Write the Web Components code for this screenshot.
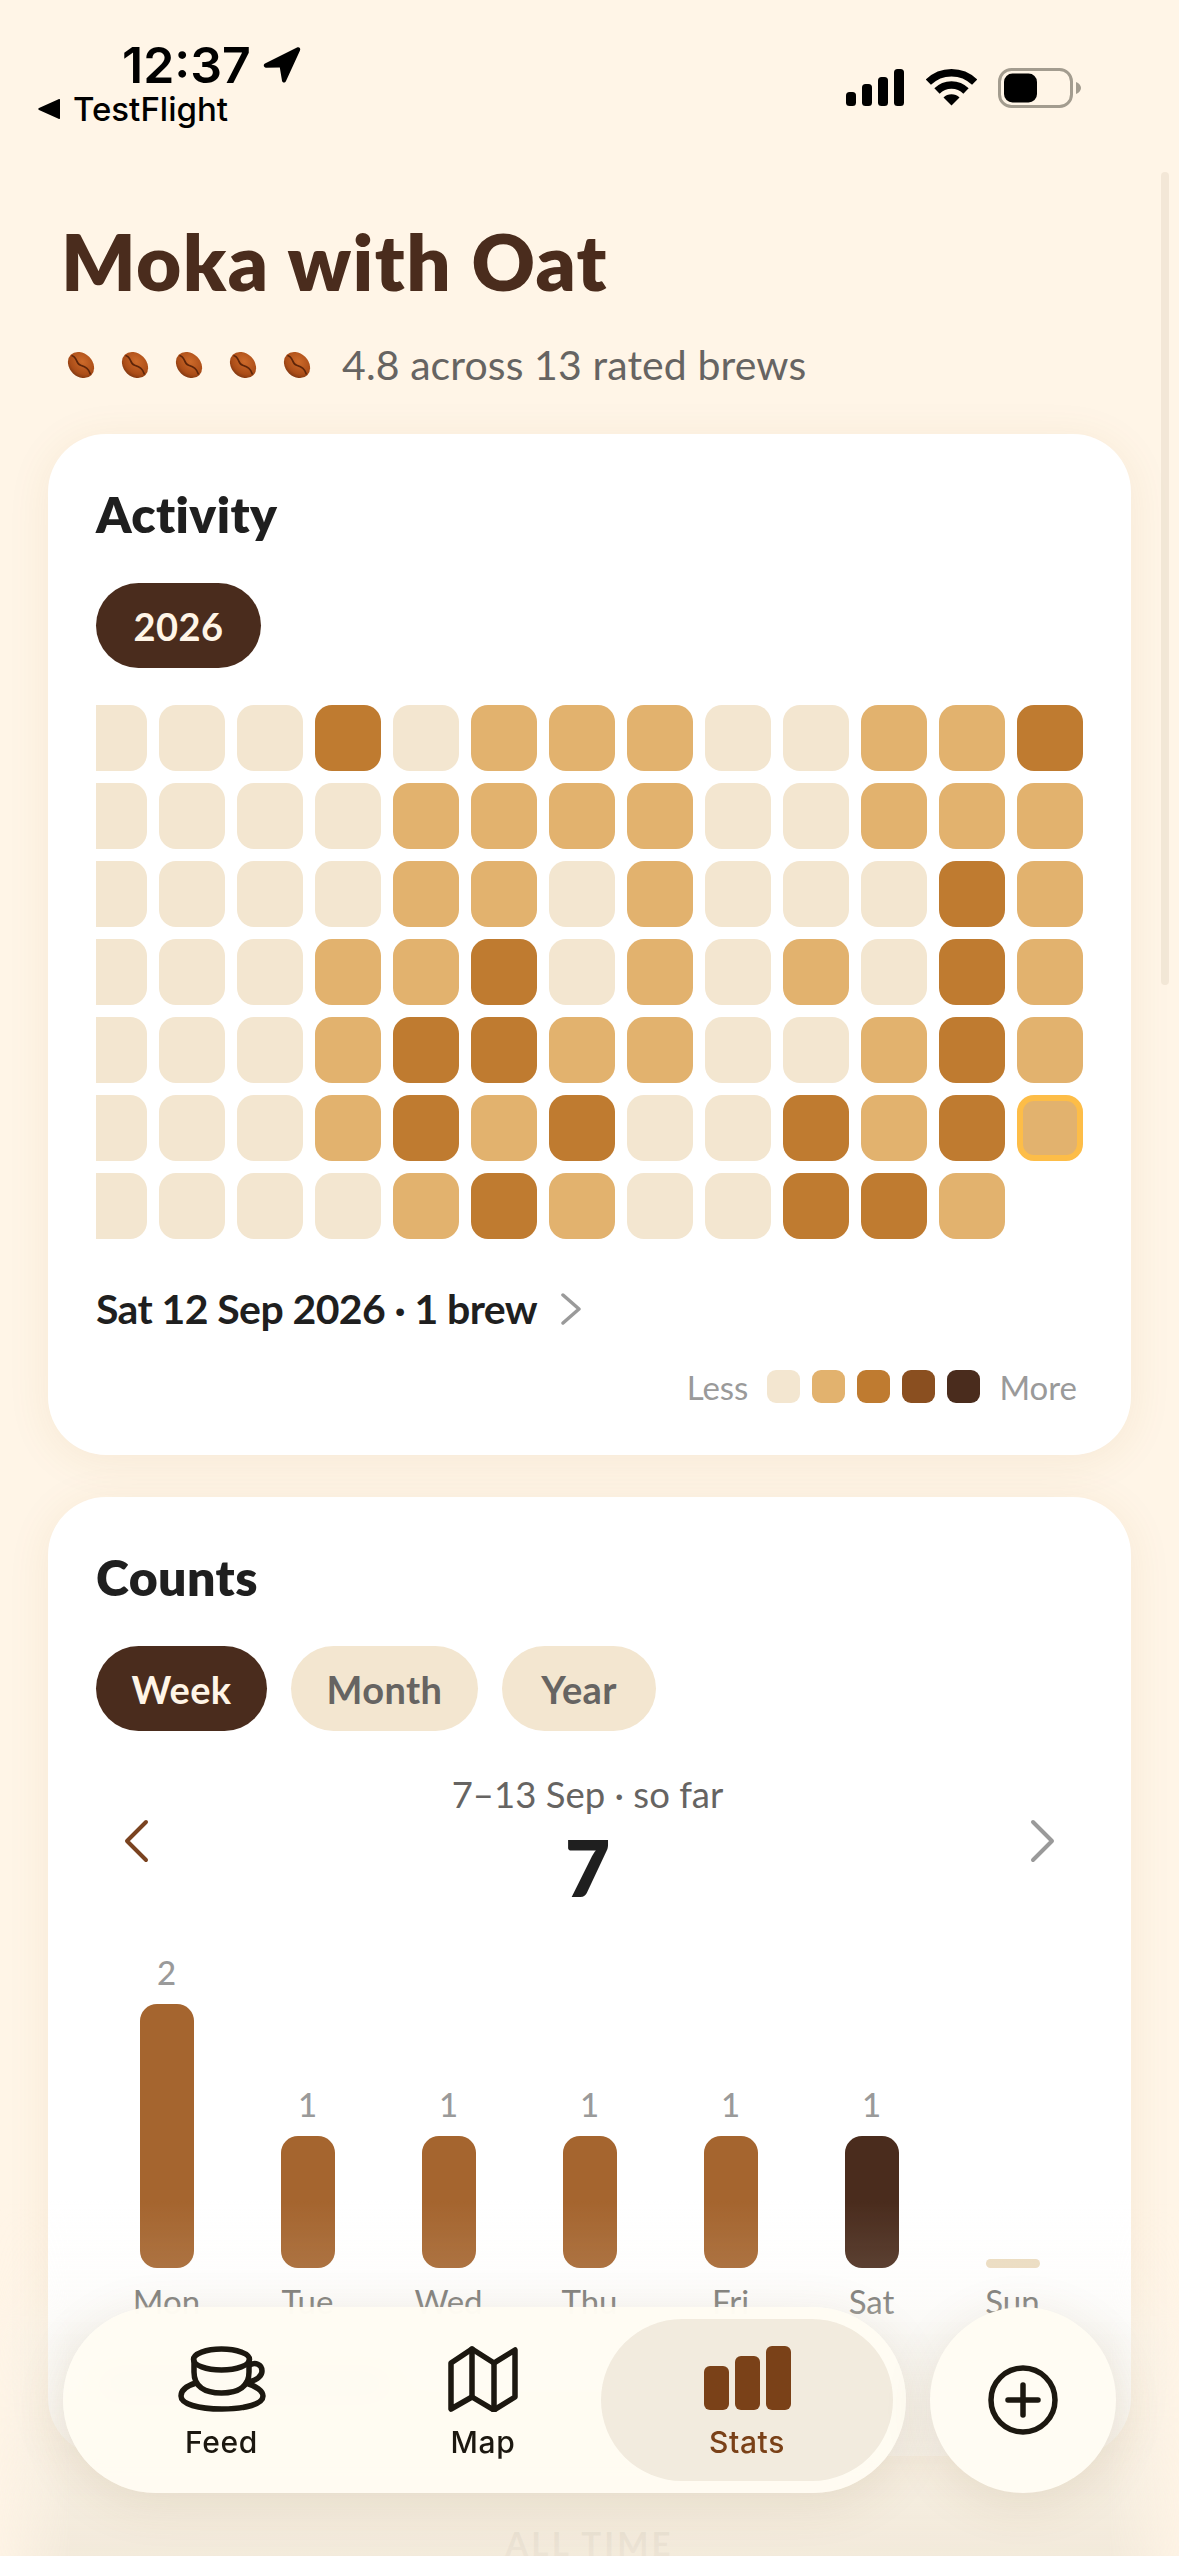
<!doctype html>
<html lang="en">
<head>
<meta charset="utf-8">
<title>Moka with Oat</title>
<style>
  html, body { margin: 0; background: #fff5e7; }
  body { font-family: "Lato", "Noto Sans", sans-serif; }
</style>
</head>
<body>
<moka-app>
  <status-bar slot="top"></status-bar>
  <brew-header name="Moka with Oat" rating="4.8 across 13 rated brews"></brew-header>
  <stat-card heading="Activity">
    <chip-row items="2026" widths="165" active="2026"></chip-row>
    <heat-map></heat-map>
  </stat-card>
  <stat-card heading="Counts" variant="counts">
    <chip-row items="Week,Month,Year" widths="171,187,154" active="Week"></chip-row>
    <count-chart></count-chart>
  </stat-card>
  <section-label>ALL TIME</section-label>
  <scroll-thumb></scroll-thumb>
  <bottom-fade></bottom-fade>
  <tab-bar></tab-bar>
  <add-button></add-button>
</moka-app>

<script>
const HEAD_FONT = `"Lato", "Noto Sans", sans-serif`;
const UI_FONT = `"Inter", "Noto Sans", sans-serif`;

class MokaApp extends HTMLElement {
  constructor() {
    super();
    this.attachShadow({ mode: 'open' });
    this.shadowRoot.innerHTML = `
      <style>
        :host {
          display: flex; flex-direction: column; position: relative;
          width: 1179px; height: 2556px; overflow: hidden;
          padding: 0 48px; box-sizing: border-box;
          background: #fff5e7; font-family: ${HEAD_FONT};
        }
      </style>
      <slot name="top"></slot>
      <slot></slot>
    `;
  }
}

class StatusBar extends HTMLElement {
  constructor() {
    super();
    this.attachShadow({ mode: 'open' });
    this.shadowRoot.innerHTML = `
      <style>
        :host {
          display: flex; justify-content: space-between; align-items: flex-start;
          height: 216px; flex: none; margin: 0 -48px; font-family: ${UI_FONT}; color: #000;
        }
        .left { padding: 40px 0 0 38px; }
        .time {
          display: flex; align-items: center; gap: 11px; padding-left: 84px;
          font-size: 50px; font-weight: 600; line-height: 50px; letter-spacing: 0;
        }
        .back {
          display: flex; align-items: center; gap: 13px;
          font-size: 33px; font-weight: 500; line-height: 38px;
        }
        .right { display: flex; align-items: flex-start; padding: 68px 97px 0 0; }
        .signal { margin-right: 21px; }
        .wifi { margin-right: 21px; }
        svg { display: block; }
      </style>
      <div class="left">
        <div class="time">12:37
          <svg width="40" height="38" viewBox="0 0 40 38"><path d="M3 17.5 35 1.5c2.2-1 3.9.8 3 3L24 35c-1 2.2-3.6 2-4-.3l-2.2-13.2L4 21.800c-2.400-.4-3-3.200-1-4.300Z" fill="#000"/></svg>
        </div>
        <div class="back">
          <svg width="22" height="20" viewBox="0 0 22 20"><path d="M22 1v18a1 1 0 0 1-1.500.8L1 11a1.200 1.200 0 0 1 0-2L20.500.2A1 1 0 0 1 22 1Z" fill="#000"/></svg>
          <span>TestFlight</span>
        </div>
      </div>
      <div class="right">
        <svg class="signal" width="59" height="38" viewBox="0 0 59 38" fill="#000">
          <rect x="0" y="24" width="10" height="14" rx="3.500"/>
          <rect x="16" y="16" width="10" height="22" rx="3.500"/>
          <rect x="32" y="9" width="10" height="29" rx="3.500"/>
          <rect x="48" y="1" width="10" height="37" rx="3.500"/>
        </svg>
        <svg class="wifi" width="51" height="38" viewBox="0 0 51 38" fill="none" stroke="#000" stroke-width="7.500">
          <path d="M2.300 14.200a33 33 0 0 1 46.400 0"/>
          <path d="M11 23a20.500 20.500 0 0 1 29 0"/>
          <path d="M25.500 37.500 17.500 29.500a11.300 11.300 0 0 1 16 0Z" fill="#000" stroke="none"/>
        </svg>
        <svg width="84" height="40" viewBox="0 0 84 40">
          <rect x="1.500" y="1.500" width="72" height="37" rx="12" fill="none" stroke="#a39c8f" stroke-width="3"/>
          <rect x="6" y="5.500" width="33" height="29" rx="8.500" fill="#000"/>
          <path d="M78 14c3 1 5 3.500 5 6s-2 5-5 6Z" fill="#a39c8f"/>
        </svg>
      </div>
    `;
  }
}

class BrewHeader extends HTMLElement {
  constructor() {
    super();
    this.attachShadow({ mode: 'open' });
    const bean = `
      <svg width="30" height="30" viewBox="0 0 30 30">
        <g transform="rotate(45 15 15)">
          <ellipse cx="15" cy="15" rx="14.500" ry="11.500" fill="url(#beanFill)"/>
          <path d="M1.500 15C7 11.500 10 18 15 15.500S23 12 28.500 15" fill="none" stroke="#5c2409" stroke-width="1.600"/>
        </g>
      </svg>`;
    this.shadowRoot.innerHTML = `
      <style>
        :host { display: block; flex: none; padding: 0 0 0 13px; }
        h1 {
          margin: 0; font-size: 78px; line-height: 90px; font-weight: 800;
          color: #4a2c1d; letter-spacing: 1.400px;
        }
        .rating { display: flex; align-items: center; margin-top: 34px; height: 50px; }
        .beans { display: flex; gap: 24px; margin-left: 5px; margin-right: 30px; }
        .beans svg { display: block; }
        .txt { font-size: 41px; line-height: 50px; color: #666462; letter-spacing: .1px; }
      </style>
      <svg width="0" height="0" style="position:absolute">
        <defs>
          <radialGradient id="beanFill" cx="45%" cy="35%" r="70%">
            <stop offset="0" stop-color="#cd6a2a"/>
            <stop offset=".7" stop-color="#ab4d18"/>
            <stop offset="1" stop-color="#7a3410"/>
          </radialGradient>
        </defs>
      </svg>
      <h1>${this.getAttribute('name')}</h1>
      <div class="rating">
        <div class="beans">${bean.repeat(5)}</div>
        <span class="txt">${this.getAttribute('rating')}</span>
      </div>
    `;
  }
}

class StatCard extends HTMLElement {
  constructor() {
    super();
    this.attachShadow({ mode: 'open' });
    const counts = this.getAttribute('variant') === 'counts';
    this.shadowRoot.innerHTML = `
      <style>
        :host {
          display: block; flex: none; background: #fff; border-radius: 58px;
          box-sizing: border-box; padding: 49px 48px 0;
          margin-top: ${counts ? 42 : 44}px; height: ${counts ? 959 : 1021}px;
          box-shadow: 0 6px 44px rgba(150, 100, 30, .085);
        }
        h2 {
          margin: 0 0 38px; font-size: 50px; line-height: 62px; letter-spacing: .4px;
          font-weight: 800; color: #1f1f1f;
        }
      </style>
      <h2>${this.getAttribute('heading')}</h2>
      <slot></slot>
    `;
  }
}

class ChipRow extends HTMLElement {
  constructor() {
    super();
    this.attachShadow({ mode: 'open' });
    const active = this.getAttribute('active');
    const widths = this.getAttribute('widths').split(',');
    const chips = this.getAttribute('items').split(',').map((label, i) =>
      `<span class="chip ${label === active ? 'on' : ''}" style="width:${widths[i]}px">${label}</span>`).join('');
    this.shadowRoot.innerHTML = `
      <style>
        :host { display: flex; gap: 24px; }
        .chip {
          display: flex; align-items: center; justify-content: center; height: 85px;
          border-radius: 42.500px; background: #f3e6d0; color: #666462;
          font-size: 38px; font-weight: 700; letter-spacing: .4px;
        }
        .chip.on { background: #4a2c1d; color: #fff5e7; }
      </style>
      ${chips}
    `;
  }
}

const HEAT_ROWS = [
  '0002011100112',
  '0000111100111',
  '0000110100021',
  '0001120101021',
  '0001221100121',
  '000121200212s',
  '000012100221-',
];

class HeatMap extends HTMLElement {
  constructor() {
    super();
    this.attachShadow({ mode: 'open' });
    const cells = HEAT_ROWS.join('').split('').map(c =>
      c === '-' ? '<i class="none"></i>' : `<i class="l${c}"></i>`).join('');
    this.shadowRoot.innerHTML = `
      <style>
        :host { display: block; margin-top: 37px; }
        .grid {
          display: grid; grid-template-columns: repeat(13, 66px); grid-auto-rows: 66px;
          gap: 12px; justify-content: end; overflow: hidden;
        }
        i { display: block; border-radius: 17px; box-sizing: border-box; }
        .none { background: none; }
        .l0 { background: #f3e6d0; }
        .l1 { background: #e2b26e; }
        .l2 { background: #bf7b30; }
        .ls { background: #e2b26e; border: 6px solid #fdbd48; }
        .day {
          display: flex; align-items: center; gap: 23px; margin-top: 44px;
          font-size: 41px; line-height: 52px; font-weight: 700; color: #1f1f1f;
          letter-spacing: -.6px;
        }
        .day svg { display: block; }
        .legend {
          display: flex; align-items: center; justify-content: flex-end; gap: 12px;
          margin-top: 35px; padding-right: 6px; height: 33px;
          font-size: 33px; color: #9a9a9a;
        }
        .legend b { display: block; width: 33px; height: 33px; border-radius: 9px; }
        .legend .less { margin-right: 7px; }
        .legend .more { margin-left: 7px; }
      </style>
      <div class="grid">${cells}</div>
      <div class="day">
        <span>Sat 12 Sep 2026 · 1 brew</span>
        <svg width="22" height="32" viewBox="0 0 22 32" fill="none" stroke="#9a9a9a" stroke-width="3.500" stroke-linecap="round" stroke-linejoin="round"><path d="M3 2l16 14L3 30"/></svg>
      </div>
      <div class="legend">
        <span class="less">Less</span>
        <b style="background:#f3e6d0"></b>
        <b style="background:#e2b26e"></b>
        <b style="background:#bf7b30"></b>
        <b style="background:#8a4f20"></b>
        <b style="background:#4a2c1d"></b>
        <span class="more">More</span>
      </div>
    `;
  }
}

const WEEK = [
  { day: 'Mon', n: 2 }, { day: 'Tue', n: 1 }, { day: 'Wed', n: 1 }, { day: 'Thu', n: 1 },
  { day: 'Fri', n: 1 }, { day: 'Sat', n: 1, today: true }, { day: 'Sun', n: 0 },
];

class CountChart extends HTMLElement {
  constructor() {
    super();
    this.attachShadow({ mode: 'open' });
    const cols = WEEK.map(({ day, n, today }) => `
      <div class="col">
        ${n ? `<span class="val">${n}</span>` : ''}
        <div class="bar ${today ? 'today' : ''} ${n ? '' : 'zero'}" style="height:${n ? n * 132 : 9}px"></div>
        <span class="name">${day}</span>
      </div>`).join('');
    const chevron = (color, d) => `<svg width="28" height="44" viewBox="0 0 28 44" fill="none" stroke="${color}" stroke-width="4" stroke-linecap="round" stroke-linejoin="round"><path d="${d}"/></svg>`;
    this.shadowRoot.innerHTML = `
      <style>
        :host { display: block; }
        .head {
          display: flex; align-items: flex-start; justify-content: space-between;
          padding: 0 26px; margin-top: 39px; height: 182px;
        }
        .head svg { margin-top: 49px; }
        .mid { text-align: center; flex: 1; margin-left: -4px; }
        .range { font-size: 36.500px; line-height: 48px; color: #666462; }
        .total { font-size: 78px; line-height: 74px; font-weight: 800; color: #1f1f1f; margin-top: 12px; }
        svg { display: block; }
        .chart {
          display: grid; grid-template-columns: repeat(7, 141px); align-items: end;
        }
        .col { display: flex; flex-direction: column; align-items: center; justify-content: flex-end; }
        .val { font-size: 33px; line-height: 40px; color: #9a9a9a; margin-bottom: 12px; font-weight: 500; }
        .bar { width: 54px; border-radius: 17px; background: #a5652f; }
        .bar.today { background: #4a2c1d; }
        .bar.zero { background: #ecdcc0; border-radius: 5px; }
        .name { font-size: 33px; line-height: 40px; color: #6f6f6d; margin-top: 13px; height: 40px; }
        .smudge {
          width: 290px; height: 22px; margin: 51px 0 0 4px; border-radius: 11px;
          background: rgba(74, 44, 29, .35);
        }
      </style>
      <div class="head">
        ${chevron('#7a4320', 'M24 3 5 22l19 19')}
        <div class="mid">
          <div class="range">7–13 Sep · so far</div>
          <div class="total">7</div>
        </div>
        ${chevron('#9a9a9a', 'M4 3l19 19L4 41')}
      </div>
      <div class="chart">${cols}</div>
      <div class="smudge"></div>
    `;
  }
}

class SectionLabel extends HTMLElement {
  constructor() {
    super();
    this.attachShadow({ mode: 'open' });
    this.shadowRoot.innerHTML = `
      <style>
        :host {
          display: block; flex: none; margin-top: 75px; text-align: center;
          font-size: 33px; line-height: 24px; font-weight: 700; letter-spacing: 3.200px; color: #a59e92;
        }
      </style>
      <slot></slot>
    `;
  }
}

class ScrollThumb extends HTMLElement {
  constructor() {
    super();
    this.attachShadow({ mode: 'open' }).innerHTML = `
      <style>
        :host {
          position: absolute; top: 172px; right: 10px; width: 8px; height: 813px;
          border-radius: 4px; background: rgba(120, 100, 60, .09);
        }
      </style>
    `;
  }
}

class BottomFade extends HTMLElement {
  constructor() {
    super();
    this.attachShadow({ mode: 'open' }).innerHTML = `
      <style>
        :host {
          position: absolute; left: 0; right: 0; bottom: 0; height: 356px; pointer-events: none;
          background: linear-gradient(to bottom,
            rgba(244, 240, 232, 0) 0,
            rgba(244, 240, 232, .1) 19%,
            rgba(244, 240, 232, .2) 28%,
            rgba(243, 240, 232, .55) 40%,
            rgba(242, 233, 218, .93) 100%);
          -webkit-mask-image: linear-gradient(to right, rgba(0,0,0,.15) 0, #000 70px, #000 calc(100% - 70px), rgba(0,0,0,.15) 100%);
          mask-image: linear-gradient(to right, rgba(0,0,0,.15) 0, #000 70px, #000 calc(100% - 70px), rgba(0,0,0,.15) 100%);
        }
      </style>
    `;
  }
}

class TabBar extends HTMLElement {
  constructor() {
    super();
    this.attachShadow({ mode: 'open' });
    this.shadowRoot.innerHTML = `
      <style>
        :host {
          position: absolute; left: 63px; top: 2307px; width: 843px; height: 186px;
          display: flex; align-items: stretch; box-sizing: border-box; padding: 12px 13px 12px 0;
          border-radius: 93px; background: rgba(255, 252, 242, .95);
          -webkit-backdrop-filter: blur(14px); backdrop-filter: blur(14px);
          box-shadow: 0 10px 50px rgba(120, 90, 40, .12);
          font-family: ${UI_FONT}; color: #1c1810;
        }
        .tab {
          display: flex; flex-direction: column; align-items: center;
          box-sizing: border-box; padding-top: 27px;
          font-size: 30px; font-weight: 500; line-height: 36px; letter-spacing: .6px;
        }
        .tab svg { display: block; margin-bottom: 12px; }
        .feed { width: 317px; }
        .map { width: 206px; margin-right: 15px; }
        .stats {
          width: 292px; border-radius: 81px; background: #f2ebde; color: #7a4118;
        }
      </style>
      <div class="tab feed">
        <svg width="88" height="66" viewBox="0 0 88 66" fill="none" stroke="currentColor" stroke-width="5.500" stroke-linecap="round" stroke-linejoin="round">
          <ellipse cx="43.500" cy="13.500" rx="28" ry="10.500"/>
          <path d="M16 15v11c0 14 10 21 27.500 21S71 40 71 26V15"/>
          <path d="M72 19c5-3 12-1 12 6 0 6-6 9-13 11"/>
          <path d="M18 37C8 40 3 45 3 50c0 8 17 13 41 13s41-5 41-13c0-5-7-10-17-13"/>
        </svg>
        <span>Feed</span>
      </div>
      <div class="tab map">
        <svg width="70" height="66" viewBox="0 0 70 66" fill="none" stroke="currentColor" stroke-width="5.500" stroke-linecap="round" stroke-linejoin="round">
          <path d="M3 17 24 3l22 14L67 4v47L46 64 24 51 3 63Z"/>
          <path d="M24 3v48M46 17v47"/>
        </svg>
        <span>Map</span>
      </div>
      <div class="tab stats">
        <svg width="87" height="66" viewBox="0 0 87 66" fill="currentColor">
          <rect x="0" y="20" width="25" height="44" rx="6"/>
          <rect x="31" y="10" width="25" height="54" rx="6"/>
          <rect x="62" y="0" width="25" height="64" rx="6"/>
        </svg>
        <span>Stats</span>
      </div>
    `;
  }
}

class AddButton extends HTMLElement {
  constructor() {
    super();
    this.attachShadow({ mode: 'open' });
    this.shadowRoot.innerHTML = `
      <style>
        :host {
          position: absolute; left: 930px; top: 2307px; width: 186px; height: 186px;
          display: flex; align-items: center; justify-content: center;
          border-radius: 50%; background: #fffcf3;
          box-shadow: 0 10px 50px rgba(120, 90, 40, .12);
        }
      </style>
      <svg width="72" height="72" viewBox="0 0 72 72" fill="none" stroke="#1c1810" stroke-width="5.500" stroke-linecap="round">
        <circle cx="36" cy="36" r="32"/>
        <path d="M36 21v30M21 36h30"/>
      </svg>
    `;
  }
}

customElements.define('moka-app', MokaApp);
customElements.define('status-bar', StatusBar);
customElements.define('brew-header', BrewHeader);
customElements.define('stat-card', StatCard);
customElements.define('chip-row', ChipRow);
customElements.define('heat-map', HeatMap);
customElements.define('count-chart', CountChart);
customElements.define('section-label', SectionLabel);
customElements.define('scroll-thumb', ScrollThumb);
customElements.define('bottom-fade', BottomFade);
customElements.define('tab-bar', TabBar);
customElements.define('add-button', AddButton);
</script>
</body>
</html>
